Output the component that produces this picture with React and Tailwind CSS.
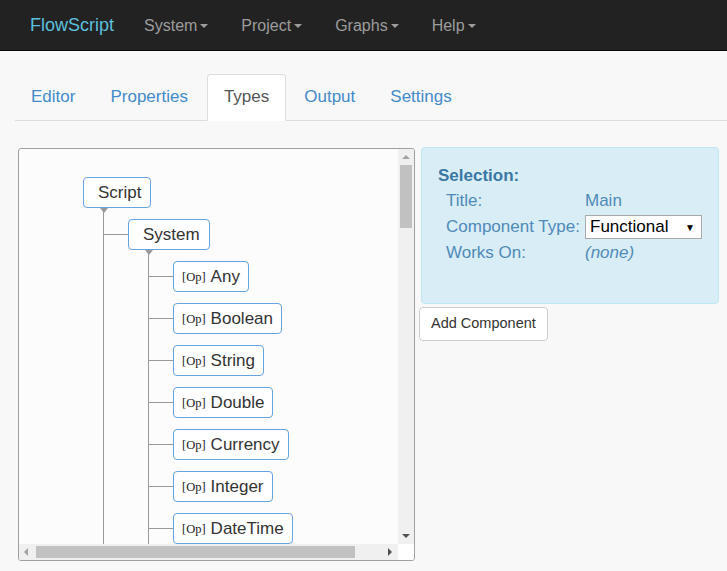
import React from 'react';

const font = { fontFamily: '"Liberation Sans", Arial, sans-serif' };

const navItems = ['System', 'Project', 'Graphs', 'Help'];
const tabs = ['Editor', 'Properties', 'Types', 'Output', 'Settings'];

const tree = {
  label: 'Script',
  kind: 'root',
  children: [
    {
      label: 'System',
      kind: 'group',
      children: ['Any', 'Boolean', 'String', 'Double', 'Currency', 'Integer', 'DateTime'].map(
        (t) => ({ label: t, kind: 'op' })
      ),
    },
  ],
};

function Caret() {
  return <span className="inline-block ml-[3px] align-middle w-0 h-0 border-l-[4px] border-r-[4px] border-t-[4px] border-l-transparent border-r-transparent border-t-[#9d9d9d]" />;
}

function NodeBox({ node }) {
  if (node.kind === 'op') {
    return (
      <div className="h-[31px] flex items-center pl-[8px] pr-[8px] bg-white border border-[#66a3e0] rounded-[4px] text-[17px] text-[#333]">
        <span className="text-[12.5px] text-[#222] mr-[5px] mt-[2px]" style={{ fontFamily: '"Liberation Serif", serif' }}>[Op]</span>
        {node.label}
      </div>
    );
  }
  return (
    <div className="h-[31px] flex items-center pl-[14px] pr-[9px] bg-white border border-[#66a3e0] rounded-[4px] text-[17px] text-[#333]">
      {node.label}
    </div>
  );
}

function TreeNode({ node, connector }) {
  return (
    <div>
      <div className="flex items-center">
        {connector && <div className="w-[24px] h-px bg-[#999]" />}
        <NodeBox node={node} />
      </div>
      {node.children && (
        <div className={connector ? 'pl-[24px]' : ''}>
          <div className="relative ml-[20px] border-l border-[#999]">
            <span className="absolute -left-[4.5px] top-0 w-0 h-0 border-l-[4px] border-r-[4px] border-t-[5px] border-l-transparent border-r-transparent border-t-[#999]" />
            {node.children.map((c) => (
              <div key={c.label} className="pt-[11px]">
                <TreeNode node={c} connector />
              </div>
            ))}
          </div>
        </div>
      )}
    </div>
  );
}

export default function App() {
  return (
    <div className="w-[727px] h-[571px] overflow-hidden bg-[#f8f8f8]" style={font}>
      {/* Navbar */}
      <div className="h-[51px] pt-[1px] bg-[#222] border-b border-[#080808] flex items-center pl-[30px]">
        <span className="text-[18px] text-[#5bc0de] mr-[30px]">FlowScript</span>
        {navItems.map((n) => (
          <span key={n} className="text-[16px] text-[#9d9d9d] mr-[33px] flex items-center">
            {n}
            <Caret />
          </span>
        ))}
      </div>

      {/* Tabs */}
      <div className="pt-[23px] pl-[15px]">
        <div className="flex border-b border-[#ddd]">
          {tabs.map((t) =>
            t === 'Types' ? (
              <div key={t} className="mr-[2px] -mb-px px-[16px] py-[10px] leading-[24px] text-[17px] text-[#555] bg-white border border-[#ddd] border-b-white rounded-t-[4px]">
                {t}
              </div>
            ) : (
              <div key={t} className="mr-[2px] pl-[16px] pr-[17px] py-[11px] leading-[24px] text-[17px] text-[#428bca]">
                {t}
              </div>
            )
          )}
        </div>
      </div>

      {/* Content */}
      <div className="flex items-start pl-[18px] pt-[26px]">
        <div className="mt-px w-[397px] h-[413px] border border-[#a0a0a0] rounded-[3px] bg-[#fcfcfc] flex flex-col overflow-hidden">
          <div className="flex flex-1 min-h-0">
            <div className="flex-1 overflow-hidden pl-[64px] pt-[28px]">
              <TreeNode node={tree} />
            </div>
            <div className="w-[16px] bg-[#f0f0f0] flex flex-col items-center">
              <span className="mt-[6px] w-0 h-0 border-l-[4px] border-r-[4px] border-b-[4px] border-l-transparent border-r-transparent border-b-[#a3a3a3]" />
              <div className="mt-[6px] w-[12px] h-[63px] bg-[#c1c1c1]" />
              <div className="flex-1" />
              <span className="mb-[6px] w-0 h-0 border-l-[4px] border-r-[4px] border-t-[4px] border-l-transparent border-r-transparent border-t-[#505050]" />
            </div>
          </div>
          <div className="h-[16px] flex">
            <div className="flex-1 bg-[#f0f0f0] flex items-center">
              <span className="ml-[5px] w-0 h-0 border-t-[4px] border-b-[4px] border-r-[4px] border-t-transparent border-b-transparent border-r-[#a3a3a3]" />
              <div className="ml-[8px] w-[319px] h-[12px] bg-[#c1c1c1]" />
              <div className="flex-1" />
              <span className="mr-[6px] w-0 h-0 border-t-[4px] border-b-[4px] border-l-[4px] border-t-transparent border-b-transparent border-l-[#505050]" />
            </div>
            <div className="w-[16px] bg-white" />
          </div>
        </div>

        <div className="ml-[4px]">
          <div className="ml-[2px] w-[298px] h-[157px] bg-[#d9edf7] border border-[#bce8f1] rounded-[4px] pl-[16px] pt-[16px]">
            <div className="text-[17px] font-bold text-[#3a78a4] leading-[24px]">Selection:</div>
            <div className="pl-[8px] text-[17px] text-[#4f8ab8]">
              <div className="flex items-center h-[26px]">
                <span className="w-[139px]">Title:</span>
                <span>Main</span>
              </div>
              <div className="flex items-center h-[26px]">
                <span className="w-[139px]">Component Type:</span>
                <div className="w-[117px] h-[24px] bg-white border border-[#a9a9a9] flex items-center pl-[4px] pr-[6px] text-black">
                  <span className="flex-1">Functional</span>
                  <span className="text-[10px]">▼</span>
                </div>
              </div>
              <div className="flex items-center h-[26px]">
                <span className="w-[139px]">Works On:</span>
                <span className="italic">(none)</span>
              </div>
            </div>
          </div>
          <div className="mt-[3px] inline-flex items-center h-[34px] px-[11px] bg-white border border-[#ccc] rounded-[4px] text-[14.5px] text-[#333]">
            Add Component
          </div>
        </div>
      </div>
    </div>
  );
}
